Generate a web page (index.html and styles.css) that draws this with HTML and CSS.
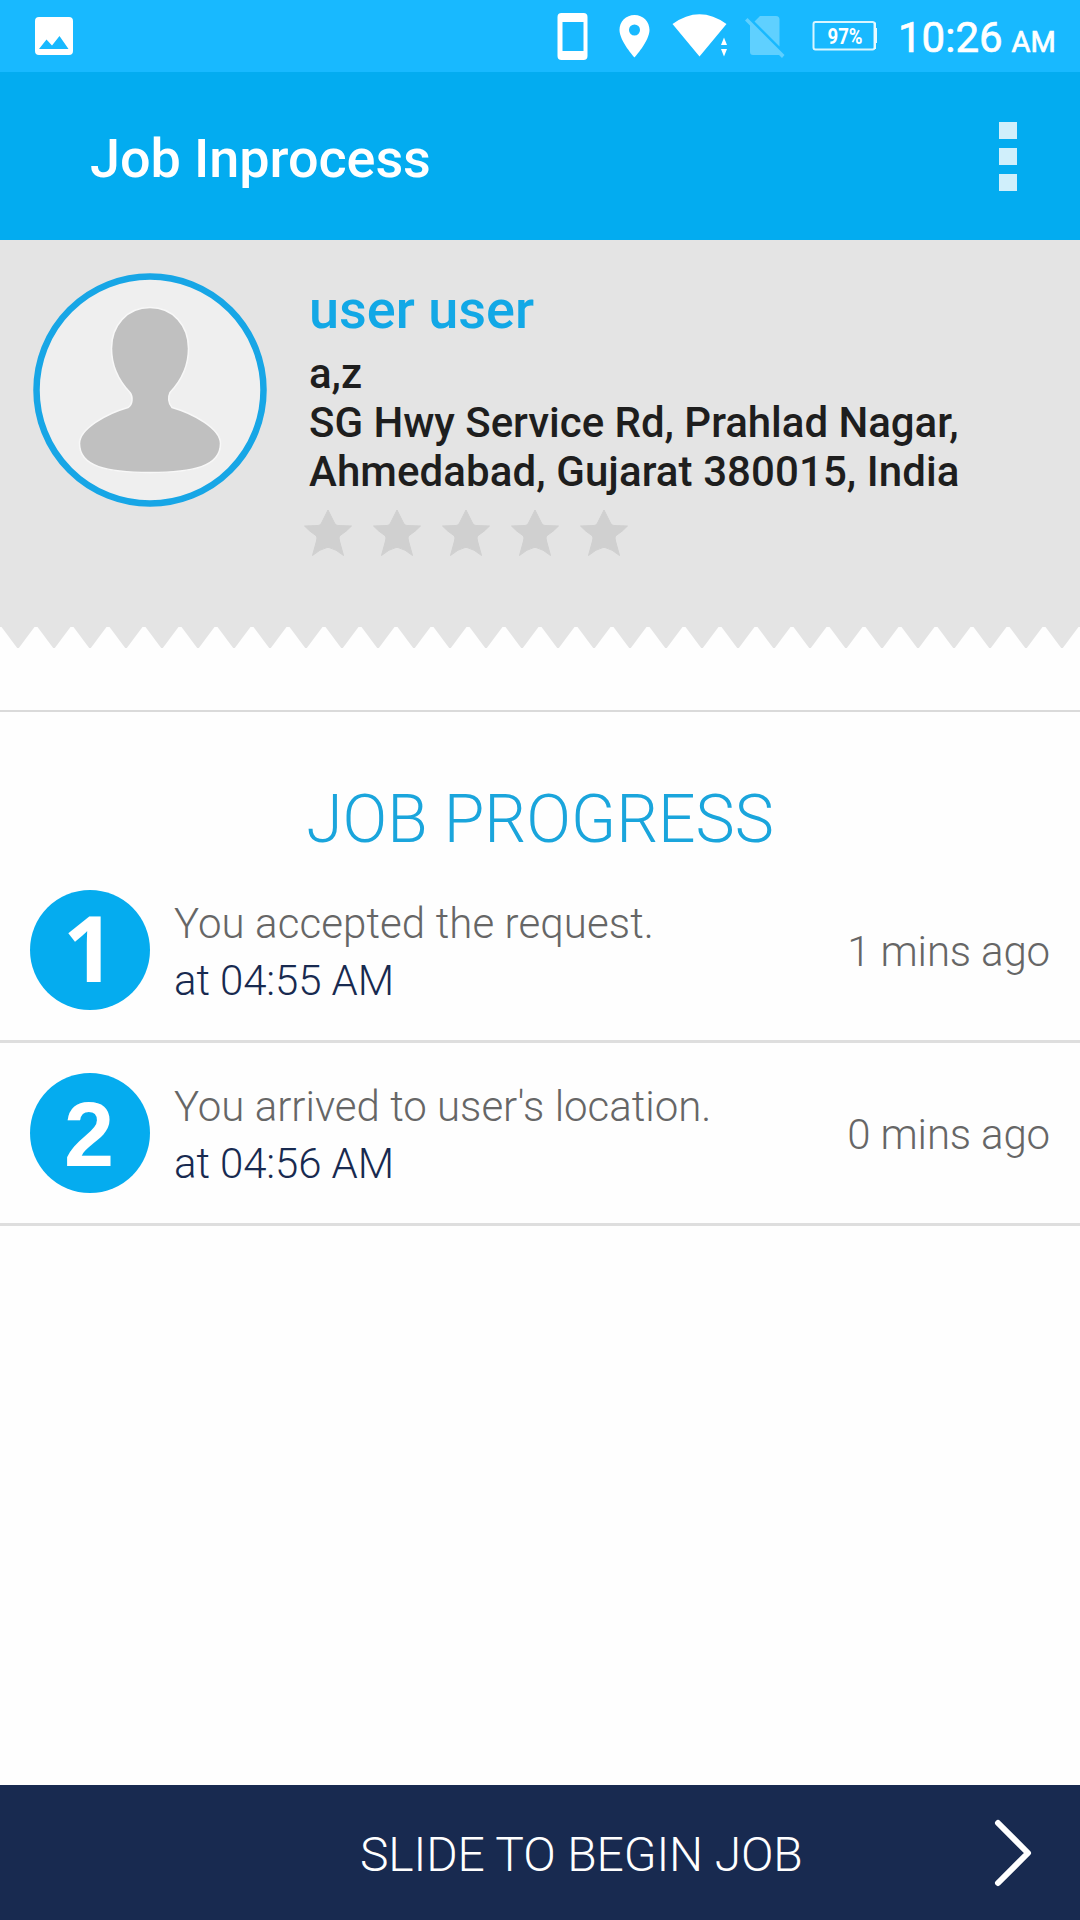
FILE: index.html
```html
<!DOCTYPE html>
<html lang="en">
<head>
<meta charset="utf-8">
<title>Job Inprocess</title>
<link rel="stylesheet" href="styles.css">
</head>
<body>
<div class="screen">
  <div class="status-bar">
    <svg class="status-photo" viewBox="0 0 38 38"><path fill="#fff" fill-rule="evenodd" d="M4 0h30q4 0 4 4v30q0 4-4 4H4q-4 0-4-4V4q0-4 4-4zM4 32h29.500L24.500 19 17 28.500 11.500 22.500z"/></svg>
    <svg class="status-icons" viewBox="0 0 340 72">
      <path fill="#fff" fill-rule="evenodd" d="M21.500 13h22q4 0 4 4v39q0 4-4 4h-22q-4 0-4-4V17q0-4 4-4zM22.500 22v29h21V22z"/>
      <path fill="#fff" fill-rule="evenodd" d="M94.500 15c-8.500 0-15 6.500-15 15 0 11 15 27.500 15 27.500s15-16.500 15-27.500c0-8.500-6.500-15-15-15zM94.500 24.500a5.500 5.500 0 1 1 0 11 5.500 5.500 0 0 1 0-11z"/>
      <path fill="#fff" d="M132.500 24q27-19.500 54 0l-27 32.500zM181 45l3-7.500 3 7.500zM181 49h6l-3 7.500z"/>
      <path fill="#5fd0ff" d="M220 16h16q3.500 0 3.500 3.500V46.500L214.500 21.500zM205 20.500l2.500-2.500 37 37-2.500 3-3-3H213q-3 0-3-3V25.500z"/>
      <path fill="none" stroke="#d8f6ff" stroke-width="2" d="M275.500 22h57q2 0 2 2v23.500q0 2-2 2h-57q-2 0-2-2V24q0-2 2-2z"/>
      <path fill="#e8faff" d="M334 22.500h2v5.500h1v15h-1v6H334z"/>
      <text class="battery-text" x="287.500" y="43.500" textLength="35" lengthAdjust="spacingAndGlyphs">97%</text>
    </svg>
    <div class="clock">10:26<span class="meridiem">AM</span></div>
  </div>
  <header class="app-bar">
    <h1 class="title">Job Inprocess</h1>
    <div class="menu"><i class="menu-dot"></i><i class="menu-dot"></i><i class="menu-dot"></i></div>
  </header>
  <section class="profile">
    <svg class="avatar" viewBox="0 0 234 234">
      <circle cx="117" cy="117" r="113.500" fill="#efefef" stroke="#17a6e6" stroke-width="6.500"/>
      <path fill="#c0c0c0" stroke="#f8f8f8" stroke-width="1.500" d="M117 34.500c23 0 38.500 18 38.500 41 0 19-9 34-18.500 44-2 4-2 11 2 15 21 6 48.500 21 48.500 36 0 23-27.500 29-70.500 29s-70.500-6-70.500-29c0-15 27.500-30 48.500-36 5-3 5-11 2-15-9.500-10-18.500-25-18.500-44 0-23 15.500-41 38.500-41z"/>
    </svg>
    <div class="profile-info">
      <h2 class="name">user user</h2>
      <p class="address">a,z<br>SG Hwy Service Rd, Prahlad Nagar,<br><span class="address-city">Ahmedabad, Gujarat 380015, India</span></p>
      <svg class="stars" viewBox="0 0 324 48">
        <defs><path id="star" fill="#d0d0d0" stroke="#d0d0d0" stroke-linejoin="round" d="M24 1L30.500 14Q31.500 16.500 34 16.500L47.500 17Q43 22 35.500 27Q34.500 28.500 35.500 32L39.500 46.500Q32 40 25 38.500H23Q16 40 8.500 46.500L12.500 32Q13.500 28.500 12.500 27Q5 22 .5 17L14 16.500Q16.500 16.500 17.500 14z"/></defs>
        <use href="#star"/><use href="#star" x="69"/><use href="#star" x="138"/><use href="#star" x="207"/><use href="#star" x="276"/>
      </svg>
    </div>
  </section>
  <svg class="zigzag" viewBox="0 0 1080 22">
    <defs><pattern id="teeth" width="36" height="22" patternUnits="userSpaceOnUse"><path fill="#e4e4e4" d="M1.500 0h33L18.800 21h-1.600z"/></pattern></defs>
    <rect width="1080" height="22" fill="url(#teeth)"/>
  </svg>
  <main class="progress">
    <h2 class="progress-title">JOB PROGRESS</h2>
    <div class="step">
      <div class="step-number step-number-one">1</div>
      <div class="step-text"><p class="step-label step-label-wide">You accepted the request.</p><p class="step-time">at 04:55 AM</p></div>
      <div class="step-ago">1 mins ago</div>
    </div>
    <div class="step">
      <div class="step-number">2</div>
      <div class="step-text"><p class="step-label">You arrived to user's location.</p><p class="step-time">at 04:56 AM</p></div>
      <div class="step-ago">0 mins ago</div>
    </div>
  </main>
  <footer class="slide-bar">
    <span class="slide-text">SLIDE TO BEGIN JOB</span>
    <svg class="chevron" viewBox="0 0 38 68"><path fill="none" stroke="#fff" stroke-width="6" stroke-linecap="round" stroke-linejoin="round" d="M4 4l30 30L4 64"/></svg>
  </footer>
</div>
</body>
</html>
```
FILE: styles.css
```css
* { box-sizing: border-box; margin: 0; padding: 0; }
body { font-family: Roboto, "Liberation Sans", sans-serif; background: #fff; }
svg { display: block; flex: none; }
.screen { width: 1080px; height: 1920px; display: flex; flex-direction: column; overflow: hidden; background: #fefefe; }

.status-bar { height: 72px; flex: none; display: flex; align-items: flex-start; background: #18b9ff; color: #fff; }
.status-photo { width: 38px; height: 38px; margin: 17px 0 0 35px; }
.status-icons { width: 340px; height: 72px; margin-left: 467px; }
.battery-text { font-size: 22px; font-weight: 700; fill: #fff; }
.clock { margin-left: 18px; padding-top: 13px; font-size: 42px; line-height: 50px; font-weight: 400; -webkit-text-stroke: .7px #fff; white-space: nowrap; }
.meridiem { font-size: 29px; margin-left: 9px; }

.app-bar { height: 168px; flex: none; display: flex; justify-content: space-between; align-items: center; padding: 0 63px 0 90px; background: #03acf0; }
.title { font-size: 54px; line-height: 64px; font-weight: 500; letter-spacing: -.08px; color: #fff; padding-top: 6px; }
.menu { display: flex; flex-direction: column; gap: 9px; }
.menu-dot { width: 18px; height: 17px; background: #d0effb; }

.profile { height: 387px; flex: none; display: flex; gap: 42px; padding: 33px 0 0 33px; background: #e4e4e4; }
.avatar { width: 234px; height: 234px; }
.name { padding-top: 5px; font-size: 54px; line-height: 64px; font-weight: 500; color: #12a8e6; }
.address { padding-top: 7px; font-size: 42px; line-height: 49px; font-weight: 500; letter-spacing: -.03px; color: #1e1e1e; white-space: nowrap; }
.address-city { letter-spacing: .08px; }
.stars { width: 324px; height: 48px; margin: 13px 0 0 -5px; }
.zigzag { width: 1080px; height: 22px; }

.progress { flex: 1; margin-top: 61px; border-top: 2px solid #dadada; }
.progress-title { padding-top: 69px; height: 148px; text-align: center; font-size: 66px; line-height: 78px; font-weight: 300; color: #1aa5dc; }
.step { height: 183px; display: flex; align-items: center; padding: 0 30px; border-bottom: 3px solid #dedede; font-size: 42px; font-weight: 300; }
.step-number { width: 120px; height: 120px; border-radius: 50%; padding-right: 2px; background: #05acef; color: #fff; font: 700 90px/124px "Liberation Sans", sans-serif; text-align: center; }
.step-number-one { font: 700 91px/115px "Open Sans", sans-serif; }
.step-text { flex: 1; margin-left: 24px; padding-top: 4px; }
.step-label { line-height: 57px; color: #666; }
.step-label-wide { letter-spacing: .1px; }
.step-time { line-height: 57px; letter-spacing: -.1px; color: #182a50; }
.step-ago { color: #666; line-height: 50px; padding-top: 4px; letter-spacing: -.15px; }

.slide-bar { height: 135px; flex: none; display: flex; justify-content: space-between; align-items: center; padding: 0 48px 0 360px; background: #182a50; color: #fff; }
.slide-text { font-size: 48px; line-height: 56px; font-weight: 300; letter-spacing: -.12px; padding-top: 4px; }
.chevron { width: 38px; height: 68px; }
```
